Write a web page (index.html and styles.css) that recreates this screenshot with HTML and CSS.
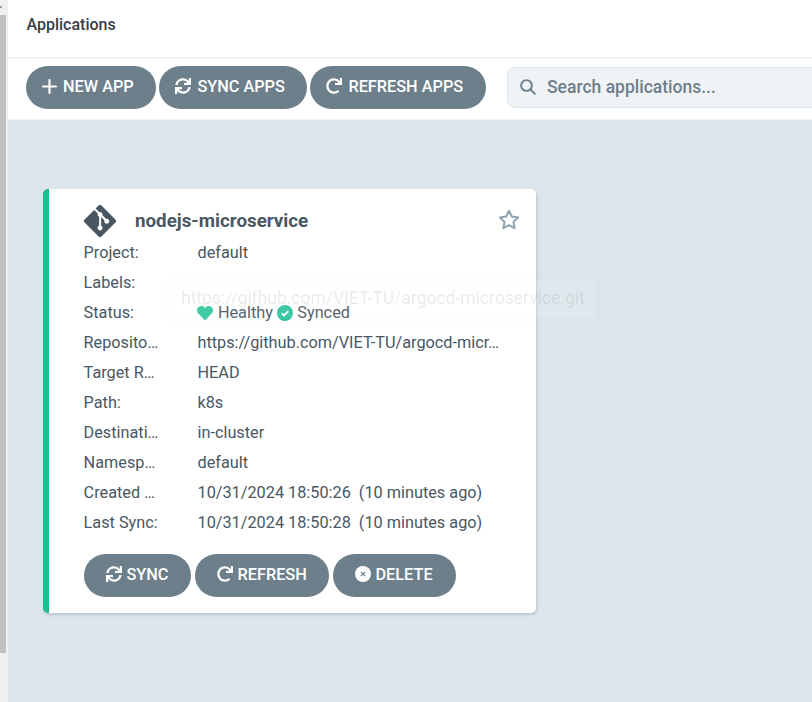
FILE: index.html
```html
<!DOCTYPE html>
<html lang="en">
<head>
<meta charset="utf-8">
<title>Applications</title>
<link rel="stylesheet" href="styles.css">
</head>
<body>
<svg class="defs" aria-hidden="true">
  <symbol id="sync" viewBox="0 0 512 512"><path d="M440.65 12.57l4 82.77A247.16 247.16 0 0 0 255.83 8C134.73 8 33.91 94.92 12.29 209.82A12 12 0 0 0 24.09 224h49.05a12 12 0 0 0 11.67-9.26 175.91 175.91 0 0 1 317-56.94l-101.46-4.86a12 12 0 0 0-12.57 12v47.41a12 12 0 0 0 12 12H500a12 12 0 0 0 12-12V12a12 12 0 0 0-12-12h-47.37a12 12 0 0 0-11.98 12.57zM255.83 432a175.61 175.61 0 0 1-146-77.8l101.8 4.87a12 12 0 0 0 12.57-12v-47.4a12 12 0 0 0-12-12H12a12 12 0 0 0-12 12V500a12 12 0 0 0 12 12h47.35a12 12 0 0 0 12-12.6l-4.15-82.57A247.17 247.17 0 0 0 255.83 504c121.11 0 221.93-86.92 243.55-201.82a12 12 0 0 0-11.8-14.18h-49.05a12 12 0 0 0-11.67 9.26A175.86 175.86 0 0 1 255.83 432z"/></symbol>
  <symbol id="redo" viewBox="0 0 512 512"><path d="M500.33 0h-47.41a12 12 0 0 0-12 12.57l4 82.76A247.42 247.42 0 0 0 256 8C119.34 8 7.9 119.53 8 256.19 8.1 393.07 119.1 504 256 504a247.1 247.1 0 0 0 166.18-63.91 12 12 0 0 0 .48-17.43l-34-34a12 12 0 0 0-16.38-.55A176 176 0 1 1 402.1 157.8l-101.53-4.87a12 12 0 0 0-12.57 12v47.41a12 12 0 0 0 12 12h200.33a12 12 0 0 0 12-12V12a12 12 0 0 0-12-12z"/></symbol>
</svg>
<div class="app">
  <div class="scrollbar"><div class="arrow"></div><div class="thumb"></div></div>
  <div class="page">
    <header class="top">Applications</header>
    <div class="toolbar">
      <button class="btn new"><svg class="ic plus" viewBox="0 0 14 14"><path d="M7 1v12M1 7h12" fill="none" stroke="#fff" stroke-width="2" stroke-linecap="round"/></svg><span>NEW APP</span></button>
      <button class="btn sync-apps"><svg class="ic"><use href="#sync"/></svg><span>SYNC APPS</span></button>
      <button class="btn refresh-apps"><svg class="ic"><use href="#redo"/></svg><span>REFRESH APPS</span></button>
      <div class="search"><svg viewBox="0 0 16 16"><circle cx="6.3" cy="6.3" r="5.2"/><path d="M10.2 10.2l4.7 4.7"/></svg><span>Search applications...</span></div>
    </div>
    <main>
      <article class="card">
        <div class="title">
          <svg class="git" viewBox="0 32 448 448"><path d="M439.55 236.05L244 40.45a28.87 28.87 0 0 0-40.81 0l-40.66 40.63 51.52 51.52c27.06-9.14 52.68 16.77 43.39 43.68l49.66 49.66c34.23-11.8 61.18 31 35.47 56.69-26.49 26.49-70.21-2.87-56-37.34L240.22 199v121.85c25.3 12.54 22.26 41.85 9.08 55a34.34 34.34 0 0 1-48.55 0c-17.57-17.6-11.07-46.91 11.25-56v-123c-20.8-8.51-24.6-30.74-18.64-45L142.57 101 8.45 235.14a28.86 28.86 0 0 0 0 40.81l195.61 195.6a28.86 28.86 0 0 0 40.8 0l194.69-194.69a28.86 28.86 0 0 0 0-40.81z"/></svg>
          <h2>nodejs-microservice</h2>
          <svg class="star" viewBox="0 0 22 21"><path d="M11 1.8l2.8 5.8 6.2.9-4.5 4.4 1.1 6.3L11 16.2l-5.6 3 1.1-6.3L2 8.5l6.2-.9z"/></svg>
        </div>
        <dl>
          <dt>Project:</dt><dd>default</dd>
          <dt>Labels:</dt><dd></dd>
          <dt>Status:</dt>
          <dd class="status"><svg class="heart" viewBox="0 0 512 512"><path d="M462.300 62.600C407.500 15.900 326 24.300 275.700 76.200L256 96.500l-19.700-20.300C186.100 24.300 104.500 15.900 49.700 62.600c-62.800 53.600-66.100 149.800-9.900 207.900l193.500 199.800c12.500 12.900 32.800 12.900 45.300 0l193.500-199.800c56.300-58.100 53-154.300-9.800-207.900z"/></svg><span class="healthy">Healthy</span><svg class="check" viewBox="0 0 16 16"><circle cx="8" cy="8" r="8"/><path d="M4.800 8.300l2.200 2.100 4.300-4.300"/></svg><span>Synced</span></dd>
          <dt>Reposito…</dt><dd>https://github.com/VIET-TU/argocd-micr…</dd>
          <dt>Target R…</dt><dd>HEAD</dd>
          <dt>Path:</dt><dd>k8s</dd>
          <dt>Destinati…</dt><dd>in-cluster</dd>
          <dt>Namesp…</dt><dd>default</dd>
          <dt>Created …</dt><dd>10/31/2024 18:50:26 &nbsp;(10 minutes ago)</dd>
          <dt>Last Sync:</dt><dd>10/31/2024 18:50:28 &nbsp;(10 minutes ago)</dd>
        </dl>
        <div class="actions">
          <button class="btn sync"><svg class="ic"><use href="#sync"/></svg><span>SYNC</span></button>
          <button class="btn refresh"><svg class="ic"><use href="#redo"/></svg><span>REFRESH</span></button>
          <button class="btn delete"><svg class="ic" viewBox="0 0 16 16"><circle cx="8" cy="8" r="8"/><path d="M5.900 5.900l4.200 4.200m0-4.200l-4.200 4.200" stroke="#6d7f8b" stroke-width="1.200"/></svg><span>DELETE</span></button>
        </div>
        <div class="tooltip">https://github.com/VIET-TU/argocd-microservice.git</div>
      </article>
    </main>
  </div>
</div>
</body>
</html>
```
FILE: styles.css
```css
* { box-sizing: border-box; }
body {
  margin: 0;
  overflow: hidden;
  font-family: Roboto, "Liberation Sans", sans-serif;
  font-size: 16.25px;
  color: #495763;
}
.defs { display: none; }
.app { display: flex; height: 702px; }
.scrollbar { width: 8px; background: #f0f0f0; flex: none; }
.arrow { height: 15px; padding-top: 6px; }
.arrow::before { content: ""; display: block; width: 2px; height: 2px; background: #a3a3a3; }
.thumb { width: 6px; height: 638px; background: #c1c1c1; }
.page { flex: 1; min-width: 0; display: flex; flex-direction: column; }
.top {
  height: 59px;
  padding: 13px 0 0 18.5px;
  border-bottom: 2px solid #eff3f6;
  line-height: 24px;
  font-size: 16px;
  font-weight: 500;
  color: #363c4a;
}
.toolbar {
  display: flex;
  height: 61px;
  padding: 7px 0 0 18px;
  gap: 3px;
  border-bottom: 1px solid #eff3f6;
}
.btn {
  display: flex;
  align-items: center;
  flex: none;
  height: 43px;
  padding: 0 0 2px 16px;
  border: 0;
  border-radius: 22px;
  background: #6d7f8b;
  color: #fff;
  font: 500 16.3px/20px Roboto, "Liberation Sans", sans-serif;
  white-space: nowrap;
}
.ic { width: 16px; height: 16px; fill: #fff; margin: 0 6.4px 1px 0; flex: none; }
.plus { width: 15px; height: 15px; margin-right: 6px; }
.new { width: 130px; }
.sync-apps { width: 148px; }
.refresh-apps { width: 176px; }
.search {
  display: flex;
  flex: 1;
  align-items: center;
  height: 41px;
  margin: 1px -10px 0 18px;
  padding: 0 0 2px 12px;
  border: 1px solid #dee6eb;
  border-radius: 8px;
  background: #eff3f6;
  color: #6d7f8b;
  font-size: 17.5px;
  font-weight: 500;
}
.search svg { width: 16.5px; height: 16.5px; margin: 2px 10.5px 0 0; fill: none; stroke: #6d7f8b; stroke-width: 1.9; }
main { flex: 1; padding: 69px 0 0 35px; background: #dee6ec; }
.card {
  position: relative;
  width: 493px;
  height: 424px;
  padding: 15px 16px 0 34.6px;
  border-left: 6px solid #18be94;
  border-radius: 5px;
  background: #fff;
  box-shadow: 1px 2px 3px rgba(109, 127, 139, .3);
}
.title { display: flex; align-items: center; height: 34px; }
.git { width: 32px; height: 32px; margin-bottom: 1px; fill: #495763; }
h2 { flex: 1; margin: 0 0 0 19.4px; font-size: 18.8px; font-weight: 700; }
.star { width: 22px; height: 21px; margin-bottom: 3px; fill: none; stroke: #8fa4b1; stroke-width: 2; stroke-linejoin: round; }
dl {
  display: grid;
  grid-template-columns: 113.9px 1fr;
  grid-auto-rows: 30px;
  margin: 0;
  line-height: 30px;
  white-space: nowrap;
}
dd { margin: 0; font-size: 16.28px; }
.status { display: flex; align-items: center; }
.heart { width: 16px; height: 16px; margin: 0 4.4px 1px 0; fill: #31c69e; }
.healthy { margin-right: 4.4px; }
.check { width: 16px; height: 16px; margin: 0 4px 1px 0; fill: #2bc49b; }
.check path { fill: none; stroke: #fff; stroke-width: 1.8; }
.actions { display: flex; gap: 4px; padding: 16px 0 0 .4px; }
.actions .btn { padding-left: 22px; }
.actions .ic { margin-right: 4.5px; }
.sync { width: 107px; }
.refresh { width: 134px; }
.delete { width: 123px; }
.tooltip {
  position: absolute;
  left: 121px;
  top: 92px;
  width: 426px;
  height: 37px;
  padding-left: 11px;
  border-radius: 5px;
  background: rgba(255, 255, 255, .08);
  box-shadow: 0 0 18px rgba(73, 87, 99, .03);
  color: rgba(73, 87, 99, .13);
  font-size: 17.5px;
  line-height: 35px;
  white-space: nowrap;
}
.tooltip::after {
  content: "";
  position: absolute;
  left: 206px;
  top: 37px;
  border: 8px solid transparent;
  border-top-color: rgba(255, 255, 255, .08);
  border-bottom: 0;
}
```
